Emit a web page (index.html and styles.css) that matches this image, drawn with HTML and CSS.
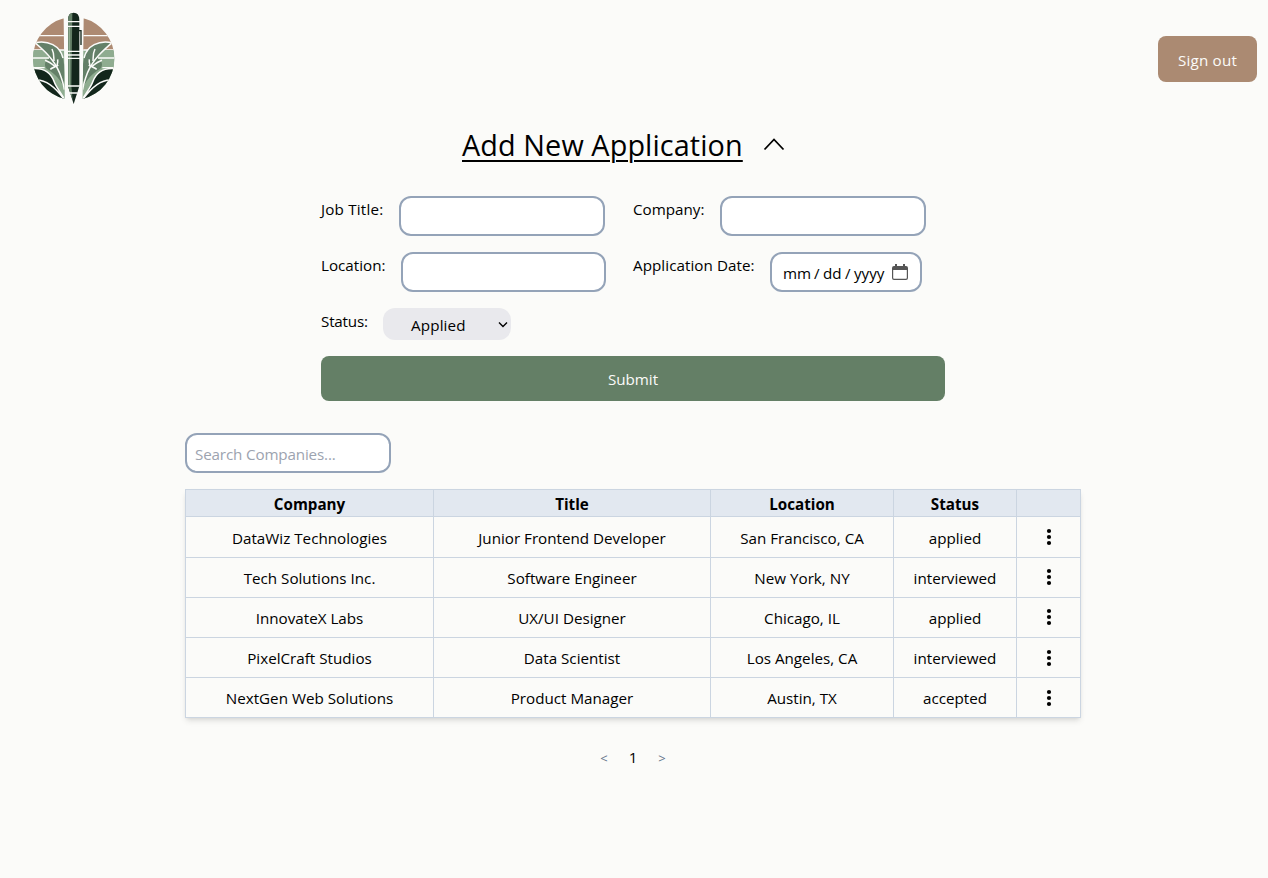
FILE: index.html
```html
<!DOCTYPE html>
<html lang="en">
<head>
<meta charset="utf-8">
<title>Job Applications</title>
<link rel="stylesheet" href="styles.css">
</head>
<body>
<header class="header">
  <svg class="logo" viewBox="0 0 300 318" aria-label="Logo">
    <defs>
      <clipPath id="disc"><path d="M119 43A125 125 0 0 0 122 285ZM179 43A125 125 0 0 1 176 285Z"/></clipPath>
      <g id="leaf">
        <path fill="#8fac90" d="M20 138H60L122 180V288L20 194Z"/>
        <path fill="#648068" d="M34 116C72 108 108 125 117 162C123 192 124 224 120 250C104 217 84 204 68 194C58 184 64 168 76 163C69 150 52 132 34 116Z"/>
        <path fill="#13261c" d="M20 196C56 190 76 204 87 226C96 250 112 268 122 288L70 290L18 220Z"/>
        <g fill="none" stroke="#fbfbf9" stroke-width="4.500">
          <path d="M28 112C60 139 89 165 106 205C114 226 119 240 121 257"/>
          <path d="M34 116C72 108 108 125 117 162"/>
          <path d="M84 135C91 148 89 160 90 171M101 166C103 178 98 184 98 190M63 169C75 173 84 180 94 188M79 196C86 190 94 190 103 183"/>
          <path d="M23 194C64 189 83 212 90 232C96 250 112 268 122 287M34 228C65 226 92 246 121 287"/>
        </g>
      </g>
    </defs>
    <g clip-path="url(#disc)">
      <path fill="#ad8a72" d="M20 35H280V138H20Z"/>
      <path fill="#8fac90" d="M20 138H280V290H20Z"/>
      <path stroke="#fbfbf9" stroke-width="4" d="M20 95H280M20 138H280"/>
      <use href="#leaf"/>
      <use href="#leaf" transform="translate(297 0) scale(-1 1)"/>
      <path stroke="#fbfbf9" stroke-width="4" d="M20 162H75M222 162H280M20 191H62M235 191H280"/>
    </g>
    <path fill="#13261c" d="M132 48Q132 26 149 26Q166 26 166 48V247L149 300L132 247Z"/>
    <path fill="#648068" d="M132 48Q132 28 145 27L142 246L146 288L132 247Z"/>
    <path fill="#8fac90" d="M134 70H138V246H134Z"/>
    <path fill="none" stroke="#13261c" stroke-width="4" d="M163 80H171V123"/>
    <path stroke="#fbfbf9" stroke-width="4" d="M130 53H168M130 67H168M130 142H168M130 153H168M130 163H168M130 246H168M137 267H161"/>
  </svg>
  <button class="sign-out">Sign out</button>
</header>
<main>
  <div class="heading">
    <h1>Add New Application</h1>
    <svg class="chevron" viewBox="0 0 22 14"><path d="M1.500 12.500L11 2.500L20.500 12.500"/></svg>
  </div>
  <form class="form">
    <div class="field"><label class="l-job">Job Title:</label><input class="text-box" type="text"></div>
    <div class="field"><label class="l-company">Company:</label><input class="text-box" type="text"></div>
    <div class="field"><label class="l-location">Location:</label><input class="text-box location" type="text"></div>
    <div class="field"><label class="l-date">Application Date:</label>
      <div class="date-box"><span class="mm">mm</span><span class="sep">/</span><span class="dd">dd</span><span class="sep">/</span><span class="yyyy">yyyy</span>
        <svg class="calendar" viewBox="0 0 16 17"><path fill="#555" fill-rule="evenodd" d="M2 2H3V0H5V2H11V0H13V2H14Q16 2 16 4V14Q16 16 14 16H2Q0 16 0 14V4Q0 2 2 2ZM1.200 6V14Q1.200 14.800 2 14.800H14Q14.800 14.800 14.800 14V6Z"/></svg>
      </div>
    </div>
    <div class="field"><label class="l-status">Status:</label>
      <div class="select"><span>Applied</span><svg viewBox="0 0 10 7"><path d="M1 1.500L5 5.500L9 1.500"/></svg></div>
    </div>
    <button class="submit" type="button">Submit</button>
  </form>
  <section class="list">
    <input class="text-box search" type="text" placeholder="Search Companies...">
    <table class="table">
      <colgroup><col class="c1"><col class="c2"><col class="c3"><col class="c4"><col class="c5"></colgroup>
      <thead><tr><th>Company</th><th>Title</th><th>Location</th><th>Status</th><th></th></tr></thead>
      <tbody>
        <tr><td>DataWiz Technologies</td><td>Junior Frontend Developer</td><td>San Francisco, CA</td><td>applied</td><td><svg class="dots" viewBox="0 0 6 18"><circle cx="3" cy="3" r="2.100"/><circle cx="3" cy="9" r="2.100"/><circle cx="3" cy="15" r="2.100"/></svg></td></tr>
        <tr><td>Tech Solutions Inc.</td><td>Software Engineer</td><td>New York, NY</td><td>interviewed</td><td><svg class="dots" viewBox="0 0 6 18"><circle cx="3" cy="3" r="2.100"/><circle cx="3" cy="9" r="2.100"/><circle cx="3" cy="15" r="2.100"/></svg></td></tr>
        <tr><td>InnovateX Labs</td><td>UX/UI Designer</td><td>Chicago, IL</td><td>applied</td><td><svg class="dots" viewBox="0 0 6 18"><circle cx="3" cy="3" r="2.100"/><circle cx="3" cy="9" r="2.100"/><circle cx="3" cy="15" r="2.100"/></svg></td></tr>
        <tr><td>PixelCraft Studios</td><td>Data Scientist</td><td>Los Angeles, CA</td><td>interviewed</td><td><svg class="dots low" viewBox="0 0 6 18"><circle cx="3" cy="3" r="2.100"/><circle cx="3" cy="9" r="2.100"/><circle cx="3" cy="15" r="2.100"/></svg></td></tr>
        <tr><td>NextGen Web Solutions</td><td>Product Manager</td><td>Austin, TX</td><td>accepted</td><td><svg class="dots low" viewBox="0 0 6 18"><circle cx="3" cy="3" r="2.100"/><circle cx="3" cy="9" r="2.100"/><circle cx="3" cy="15" r="2.100"/></svg></td></tr>
      </tbody>
    </table>
    <nav class="pager"><span class="arrow">&lt;</span><span class="page">1</span><span class="arrow">&gt;</span></nav>
  </section>
</main>
</body>
</html>
```

FILE: styles.css
```css
* { box-sizing: border-box; }
body {
  margin: 0;
  background: #fbfbf9;
  color: #000;
  font: 15.2px/24px "Segoe UI", "Open Sans", sans-serif;
}
button, input { font: inherit; }
svg { display: block; }
.header {
  display: flex;
  justify-content: space-between;
  align-items: flex-start;
  height: 122px;
  padding: 4px 11px 0 24px;
}
.logo { width: 100px; height: 106px; }
.sign-out {
  width: 99px;
  height: 46px;
  margin-top: 32px;
  padding: 1px 0 0;
  border: 0;
  border-radius: 8px;
  background: #ab8a72;
  color: #fbfbf9;
  letter-spacing: .2px;
}
.heading {
  display: flex;
  height: 74px;
  padding-left: 462px;
}
h1 {
  width: 281px;
  margin: 5px 20px 0 0;
  font-size: 28.800px;
  font-weight: 400;
  line-height: 36px;
  letter-spacing: .1px;
  white-space: nowrap;
  text-decoration: underline;
  text-decoration-thickness: 2px;
  text-underline-offset: 4px;
}
.chevron { width: 22px; height: 14px; margin-top: 15px; }
.chevron path { fill: none; stroke: #000; stroke-width: 1.800; }
.form {
  display: grid;
  grid-template-columns: 312px 312px;
  row-gap: 16px;
  width: 624px;
  margin-left: 321px;
}
.field { display: flex; align-items: flex-start; white-space: nowrap; }
.field label { padding-top: 1px; }
.l-job { width: 78px; letter-spacing: .2px; }
.l-company { width: 87px; }
.l-location { width: 80px; }
.l-date { width: 137px; letter-spacing: .06px; }
.l-status { width: 62px; letter-spacing: -.2px; }
.text-box, .date-box {
  height: 40px;
  border: 2px solid #94a3b8;
  border-radius: 12px;
  background: #fff;
}
.text-box { width: 206px; padding: 2px 8px 0; outline: 0; }
.text-box.location { width: 205px; }
.date-box {
  display: flex;
  width: 152px;
  padding: 7px 0 0 11px;
}
.mm { width: 31px; }
.sep { width: 9px; }
.dd { width: 22px; }
.yyyy { width: 38px; }
.calendar { width: 16px; height: 17px; margin-top: 3px; }
.select {
  display: flex;
  justify-content: space-between;
  width: 128px;
  height: 32px;
  padding: 5px 3px 0 28px;
  border-radius: 12px;
  background: #e9e9ed;
}
.select span { letter-spacing: .15px; }
.select svg { width: 10px; height: 7px; margin-top: 8px; }
.select path { fill: none; stroke: #000; stroke-width: 1.400; }
.submit {
  grid-column: 1 / 3;
  height: 45px;
  padding: 1px 0 0;
  border: 0;
  border-radius: 8px;
  background: #647f66;
  color: #fbfbf9;
}
.list { width: 896px; margin: 32px 0 0 185px; }
.search { display: block; margin-bottom: 16px; letter-spacing: -.15px; }
.search::placeholder { color: #9ca3af; opacity: 1; }
.table {
  width: 896px;
  table-layout: fixed;
  border-collapse: collapse;
  text-align: center;
  white-space: nowrap;
  box-shadow: 0 4px 6px -1px rgba(0,0,0,.1), 0 2px 4px -2px rgba(0,0,0,.1);
}
.c1 { width: 248px; }
.c2 { width: 277px; }
.c3 { width: 183px; }
.c4 { width: 123px; }
.c5 { width: 64px; }
th, td { padding: 0; border: 1px solid #cbd5e1; }
thead { background: #e2e8f0; }
th { height: 27px; padding-top: 2px; font-weight: 700; }
td { height: 40px; }
tbody tr:first-child td { height: 41px; padding-top: 1px; }
.dots { width: 6px; height: 18px; margin: -2px auto 0; }
.dots.low { margin-top: 0; }
.pager { display: flex; padding-top: 27px; }
.pager .arrow { width: 14px; padding-top: 1px; color: #64748b; font-size: 13px; text-align: center; }
.pager .arrow:first-child { margin-left: 412px; }
.pager .page { width: 44px; text-align: center; }
```
